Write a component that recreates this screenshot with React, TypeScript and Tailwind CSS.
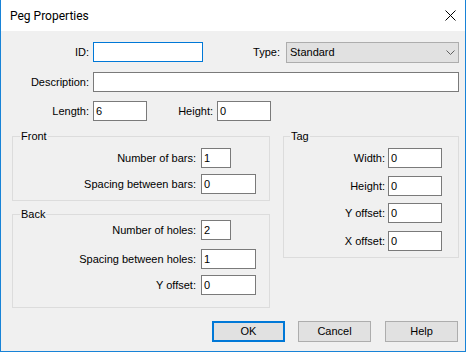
import React from "react";

function Box({ w, value, focused }: { w: string; value?: string; focused?: boolean }) {
  return (
    <div
      className={`h-[20px] ${w} shrink-0 border ${
        focused ? "border-[#0078d7]" : "border-[#7a7a7a]"
      } bg-white pl-[2px] flex items-center leading-none`}
    >
      {value}
    </div>
  );
}

function Label({ w, children }: { w: string; children: React.ReactNode }) {
  return (
    <div className={`${w} h-[20px] shrink-0 flex items-center justify-end whitespace-nowrap`}>
      {children}
    </div>
  );
}

function GRow({
  mt,
  lw,
  gap,
  iw,
  label,
  value,
}: {
  mt: string;
  lw: string;
  gap: string;
  iw: string;
  label: string;
  value: string;
}) {
  return (
    <div className={`flex items-start ${mt}`}>
      <Label w={lw}>{label}</Label>
      <div className={gap}>
        <Box w={iw} value={value} />
      </div>
    </div>
  );
}

function Group({
  cls,
  title,
  titleLeft,
  children,
}: {
  cls: string;
  title: string;
  titleLeft: string;
  children: React.ReactNode;
}) {
  return (
    <div className={`relative border border-[#dcdcdc] flex flex-col ${cls}`}>
      <span className={`absolute ${titleLeft} -top-[7px] px-[1px] bg-[#f0f0f0] leading-[13px]`}>
        {title}
      </span>
      {children}
    </div>
  );
}

function Btn({ cls, children, focused }: { cls: string; children: React.ReactNode; focused?: boolean }) {
  return (
    <div
      className={`w-[73px] h-[21px] shrink-0 flex items-center justify-center bg-[#e1e1e1] ${
        focused ? "border-2 border-[#0078d7]" : "border border-[#adadad]"
      } ${cls}`}
    >
      {children}
    </div>
  );
}

export default function App() {
  return (
    <div className="w-[466px] h-[352px] flex flex-col bg-[#f0f0f0] border-x border-b border-[#1883d7] font-['Liberation_Sans',Arial,sans-serif] text-[11px] text-black overflow-hidden">
      <div className="h-[31px] shrink-0 bg-white flex items-center justify-between pl-[9px] pr-[9px]">
        <span className="text-[12px] font-['Segoe_UI',Roboto,sans-serif]">Peg Properties</span>
        <svg width="11" height="11" viewBox="0 0 11 11">
          <path d="M0.5 0.5 L10.5 10.5 M10.5 0.5 L0.5 10.5" stroke="#000" strokeWidth="1" fill="none" />
        </svg>
      </div>

      <div className="mt-[11px] flex items-start">
        <Label w="w-[88px]">ID:</Label>
        <div className="ml-[4px]">
          <Box w="w-[110px]" focused />
        </div>
        <div className="w-[77px] h-[21px] shrink-0 flex items-center justify-end">Type:</div>
        <div className="ml-[6px] w-[173px] h-[21px] shrink-0 bg-[#e1e1e1] border border-[#adadad] flex items-center justify-between pl-[3px] pr-[3px]">
          <span>Standard</span>
          <svg width="9" height="5" viewBox="0 0 9 5">
            <path d="M0.5 0.5 L4.5 4.5 L8.5 0.5" stroke="#606060" strokeWidth="1" fill="none" />
          </svg>
        </div>
      </div>

      <div className="mt-[9px] flex items-start">
        <Label w="w-[88px]">Description:</Label>
        <div className="ml-[4px]">
          <Box w="w-[366px]" />
        </div>
      </div>

      <div className="mt-[9px] flex items-start">
        <Label w="w-[88px]">Length:</Label>
        <div className="ml-[4px]">
          <Box w="w-[54px]" value="6" />
        </div>
        <Label w="w-[66px]">Height:</Label>
        <div className="ml-[4px]">
          <Box w="w-[54px]" value="0" />
        </div>
      </div>

      <div className="mt-[15px] ml-[11px] flex items-start">
        <div className="w-[258px] flex flex-col">
          <Group cls="h-[65px] pt-[11px]" title="Front" titleLeft="left-[7px]">
            <GRow mt="" lw="w-[183px]" gap="ml-[5px]" iw="w-[30px]" label="Number of bars:" value="1" />
            <GRow mt="mt-[6px]" lw="w-[183px]" gap="ml-[5px]" iw="w-[55px]" label="Spacing between bars:" value="0" />
          </Group>
          <Group cls="mt-[13px] h-[94px] pt-[5px]" title="Back" titleLeft="left-[7px]">
            <GRow mt="" lw="w-[183px]" gap="ml-[5px]" iw="w-[30px]" label="Number of holes:" value="2" />
            <GRow mt="mt-[9px]" lw="w-[183px]" gap="ml-[5px]" iw="w-[55px]" label="Spacing between holes:" value="1" />
            <GRow mt="mt-[6px]" lw="w-[183px]" gap="ml-[5px]" iw="w-[55px]" label="Y offset:" value="0" />
          </Group>
        </div>
        <Group cls="ml-[13px] w-[176px] h-[122px] pt-[11px]" title="Tag" titleLeft="left-[6px]">
          <GRow mt="" lw="w-[101px]" gap="ml-[3px]" iw="w-[54px]" label="Width:" value="0" />
          <GRow mt="mt-[8px]" lw="w-[101px]" gap="ml-[3px]" iw="w-[54px]" label="Height:" value="0" />
          <GRow mt="mt-[7px]" lw="w-[101px]" gap="ml-[3px]" iw="w-[54px]" label="Y offset:" value="0" />
          <GRow mt="mt-[8px]" lw="w-[101px]" gap="ml-[3px]" iw="w-[54px]" label="X offset:" value="0" />
        </Group>
      </div>

      <div className="mt-[13px] ml-[211px] flex items-start">
        <Btn cls="" focused>
          OK
        </Btn>
        <Btn cls="ml-[13px]">Cancel</Btn>
        <Btn cls="ml-[14px]">Help</Btn>
      </div>
    </div>
  );
}
